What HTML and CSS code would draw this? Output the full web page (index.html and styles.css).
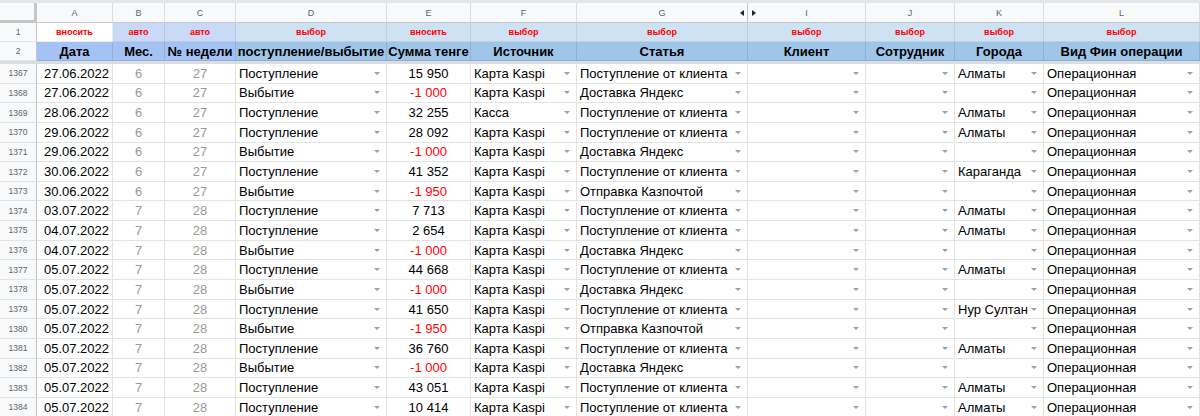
FILE: index.html
```html
<!DOCTYPE html>
<html lang="ru">
<head>
<meta charset="utf-8">
<title>Sheet</title>
<link rel="stylesheet" href="styles.css">
</head>
<body>
<div class="topband"></div>
<div class="sheet">
  <div class="row colhead">
    <div class="cell corner"></div>
    <div class="cell">A</div><div class="cell">B</div><div class="cell">C</div><div class="cell">D</div><div class="cell">E</div><div class="cell">F</div>
    <div class="cell hidecol-left">G<span class="tri-left"></span></div>
    <div class="cell hidecol-right"><span class="tri-right"></span>I</div>
    <div class="cell">J</div><div class="cell">K</div><div class="cell">L</div>
  </div>
  <div class="row hrow1">
    <div class="cell rn">1</div>
    <div class="cell c-white">вносить</div>
    <div class="cell c-lav">авто</div>
    <div class="cell c-lav">авто</div>
    <div class="cell c-lb">выбор</div>
    <div class="cell c-lb">вносить</div>
    <div class="cell c-lb">выбор</div>
    <div class="cell c-lb">выбор</div>
    <div class="cell c-lb">выбор</div>
    <div class="cell c-lb">выбор</div>
    <div class="cell c-lb">выбор</div>
    <div class="cell c-lb">выбор</div>
  </div>
  <div class="row hrow2">
    <div class="cell rn">2</div>
    <div class="cell c-cf">Дата</div>
    <div class="cell c-cf">Мес.</div>
    <div class="cell c-cf">№ недели</div>
    <div class="cell c-b">поступление/выбытие</div>
    <div class="cell c-b">Сумма тенге</div>
    <div class="cell c-b">Источник</div>
    <div class="cell c-b">Статья</div>
    <div class="cell c-b">Клиент</div>
    <div class="cell c-b">Сотрудник</div>
    <div class="cell c-b">Города</div>
    <div class="cell c-b">Вид Фин операции</div>
  </div>
  <div class="freeze"></div>
  <div id="rows"></div>
</div>
<script src="app.js"></script>
</body>
</html>
```

FILE: app.js
```js
const data = [
  [1367,"27.06.2022",6,27,"Поступление","15 950","Карта Kaspi","Поступление от клиента","Алматы"],
  [1368,"27.06.2022",6,27,"Выбытие","-1 000","Карта Kaspi","Доставка Яндекс",""],
  [1369,"28.06.2022",6,27,"Поступление","32 255","Касса","Поступление от клиента","Алматы"],
  [1370,"29.06.2022",6,27,"Поступление","28 092","Карта Kaspi","Поступление от клиента","Алматы"],
  [1371,"29.06.2022",6,27,"Выбытие","-1 000","Карта Kaspi","Доставка Яндекс",""],
  [1372,"30.06.2022",6,27,"Поступление","41 352","Карта Kaspi","Поступление от клиента","Караганда"],
  [1373,"30.06.2022",6,27,"Выбытие","-1 950","Карта Kaspi","Отправка Казпочтой",""],
  [1374,"03.07.2022",7,28,"Поступление","7 713","Карта Kaspi","Поступление от клиента","Алматы"],
  [1375,"04.07.2022",7,28,"Поступление","2 654","Карта Kaspi","Поступление от клиента","Алматы"],
  [1376,"04.07.2022",7,28,"Выбытие","-1 000","Карта Kaspi","Доставка Яндекс",""],
  [1377,"05.07.2022",7,28,"Поступление","44 668","Карта Kaspi","Поступление от клиента","Алматы"],
  [1378,"05.07.2022",7,28,"Выбытие","-1 000","Карта Kaspi","Доставка Яндекс",""],
  [1379,"05.07.2022",7,28,"Поступление","41 650","Карта Kaspi","Поступление от клиента","Нур Султан"],
  [1380,"05.07.2022",7,28,"Выбытие","-1 950","Карта Kaspi","Отправка Казпочтой",""],
  [1381,"05.07.2022",7,28,"Поступление","36 760","Карта Kaspi","Поступление от клиента","Алматы"],
  [1382,"05.07.2022",7,28,"Выбытие","-1 000","Карта Kaspi","Доставка Яндекс",""],
  [1383,"05.07.2022",7,28,"Поступление","43 051","Карта Kaspi","Поступление от клиента","Алматы"],
  [1384,"05.07.2022",7,28,"Поступление","10 414","Карта Kaspi","Поступление от клиента","Алматы"]
];
const dd = (t) => `<div class="cell dd"><span class="t">${t}</span><span class="arr"></span></div>`;
const html = data.map(r => {
  const neg = r[5].startsWith("-");
  return `<div class="row drow">
    <div class="cell rn">${r[0]}</div>
    <div class="cell ctr date">${r[1]}</div>
    <div class="cell ctr gray">${r[2]}</div>
    <div class="cell ctr gray">${r[3]}</div>
    ${dd(r[4])}
    <div class="cell ctr${neg ? " neg" : ""}">${r[5]}</div>
    ${dd(r[6])}
    ${dd(r[7])}
    ${dd("")}
    ${dd("")}
    ${dd(r[8])}
    ${dd("Операционная")}
  </div>`;
}).join("");
document.getElementById("rows").innerHTML = html;
```

FILE: styles.css
```css
* { box-sizing: border-box; }
html, body {
  margin: 0;
  padding: 0;
  background: #ffffff;
  overflow: hidden;
}
body {
  font-family: "Liberation Sans", Arial, sans-serif;
  color: #000;
}
.topband {
  height: 3px;
  background: #e3e5e8;
}
.sheet {
  width: 1200px;
}
.row {
  display: grid;
  grid-template-columns: 37px 76px 52px 71px 151px 84px 106px 171px 118px 89px 89px 156px;
}
.cell {
  border-right: 1px solid #e2e3e3;
  border-bottom: 1px solid #e2e3e3;
  display: flex;
  align-items: center;
  justify-content: center;
  white-space: nowrap;
  overflow: hidden;
  position: relative;
  font-size: 13px;
}
.colhead { height: 20px; }
.colhead .cell {
  background: #f8f9fa;
  color: #5f6368;
  font-size: 9px;
  border-right-color: #dadce0;
  border-bottom-color: #c4c7c5;
}
.colhead .corner {
  border-right: 3px solid #c4c7c5;
  border-bottom: 3px solid #c4c7c5;
}
.tri-left {
  position: absolute;
  right: 3px;
  top: 7px;
  width: 0;
  height: 0;
  border-top: 3px solid transparent;
  border-bottom: 3px solid transparent;
  border-right: 4px solid #202124;
}
.tri-right {
  position: absolute;
  left: 4px;
  top: 7px;
  width: 0;
  height: 0;
  border-top: 3px solid transparent;
  border-bottom: 3px solid transparent;
  border-left: 4px solid #202124;
}
.colhead .hidecol-left { border-right-color: #c4c7c5; }

.hrow1 { height: 19px; }
.hrow1 .cell {
  color: #ff0000;
  font-size: 9px;
  font-weight: bold;
  border-color: rgba(0, 0, 0, 0.08);
}
.hrow2 { height: 19px; }
.hrow2 .cell {
  font-size: 13px;
  font-weight: bold;
  border-color: rgba(0, 0, 0, 0.1);
  overflow: visible;
}
.c-white { background: #ffffff; }
.c-lav { background: #c9daf8; }
.c-lb { background: #cfe2f3; }
.c-cf { background: #a4c2f4; }
.c-b { background: #9fc5e8; }

.row .rn {
  background: #f8f9fa;
  color: #5f6368;
  font-size: 8.5px;
  font-weight: normal;
  border-right-color: #c4c7c5;
  border-bottom-color: #e2e3e3;
}
.freeze {
  height: 3px;
  background: #dadce0;
}
.drow { height: 19.65px; }
.ctr { justify-content: center; }
.date { padding-left: 4px; }
.gray { color: #999999; }
.neg { color: #ff0000; }
.dd {
  justify-content: space-between;
  padding: 0 6px 0 3px;
}
.dd .t {
  overflow: visible;
}
.arr {
  flex: none;
  width: 0;
  height: 0;
  margin-left: 2px;
  border-left: 3px solid transparent;
  border-right: 3px solid transparent;
  border-top: 3px solid #9aa0a6;
}
```
